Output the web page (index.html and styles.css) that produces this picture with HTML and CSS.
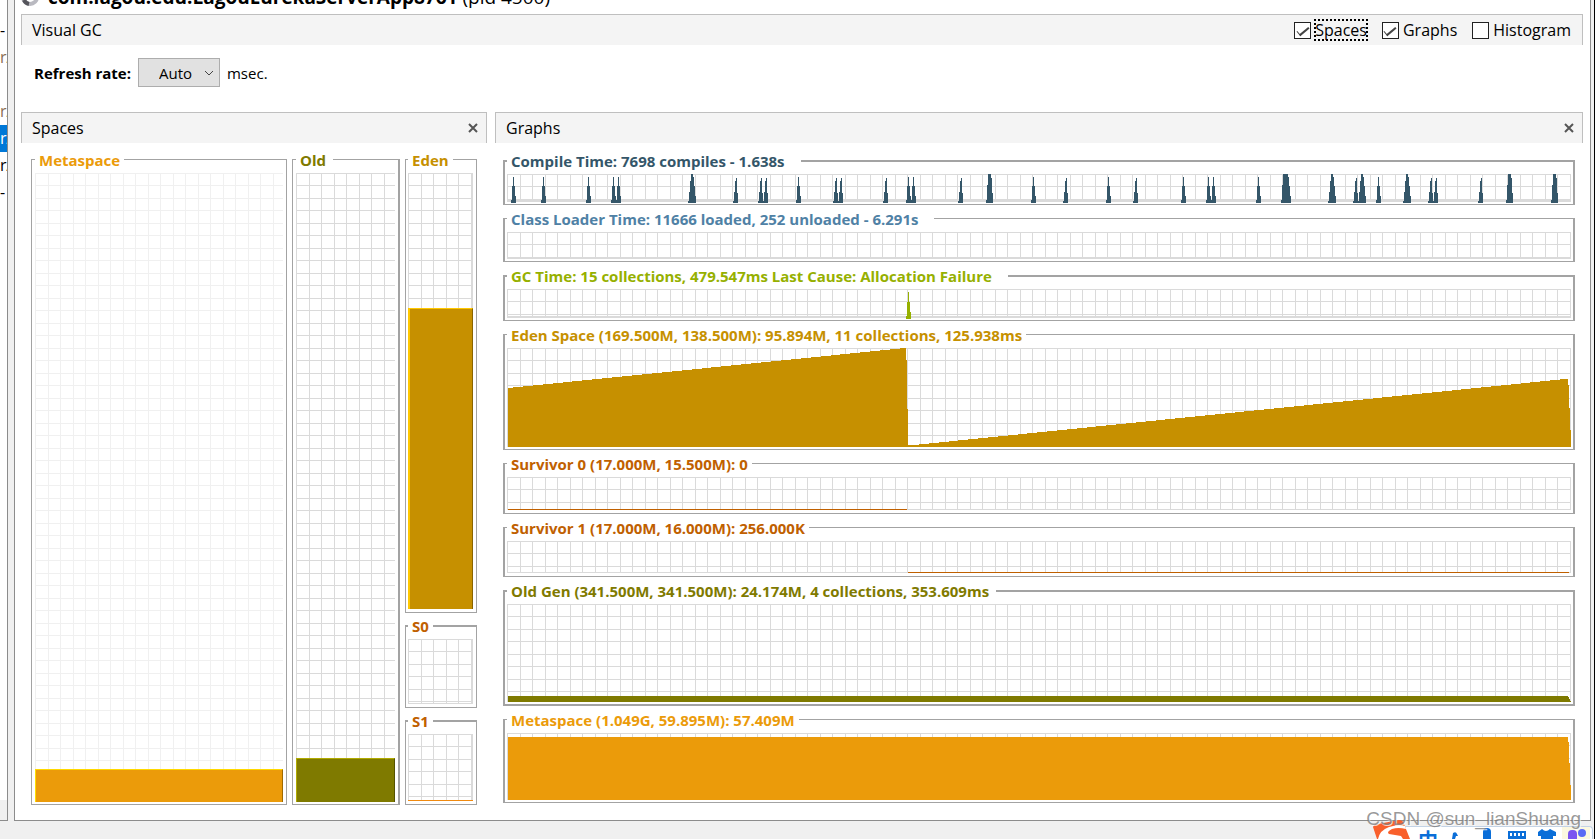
FILE: index.html
```html
<!DOCTYPE html>
<html lang="en">
<head>
<meta charset="utf-8">
<title>Visual GC</title>
<link rel="stylesheet" href="styles.css">
</head>
<body>
<div class="app">
  <aside class="sidebar">
    <ul class="tree">
      <li>-</li>
      <li class="muted">rA</li>
      <li></li>
      <li class="muted">rA</li>
      <li class="selected">rA</li>
      <li>rA</li>
      <li>-</li>
    </ul>
  </aside>

  <main class="window">
    <h1 class="title">
      <svg class="title-icon" width="18" height="18" viewBox="0 0 18 18" aria-hidden="true"><circle cx="9" cy="9" r="7" fill="none" stroke="#b9b9c0" stroke-width="4"/><path d="M3 12a7 7 0 0 0 5 4" fill="none" stroke="#55555c" stroke-width="4"/></svg>
      <span>com.lagou.edu.LagouEurekaServerApp8761 <span class="pid">(pid 4500)</span></span>
    </h1>

    <header class="tab tab-main">
      <span>Visual GC</span>
      <div class="checks">
        <label class="check"><input type="checkbox" checked><span class="focused">Spaces</span></label>
        <label class="check"><input type="checkbox" checked><span>Graphs</span></label>
        <label class="check"><input type="checkbox"><span>Histogram</span></label>
      </div>
    </header>

    <div class="toolbar">
      <label class="rate-label" for="rate">Refresh rate:</label>
      <div class="combo">
        <select id="rate"><option>Auto</option></select>
        <svg class="chevron" width="10" height="6" viewBox="0 0 10 6" aria-hidden="true"><path d="M1 1l4 4 4-4" fill="none" stroke="#444" stroke-width="1"/></svg>
      </div>
      <span>msec.</span>
    </div>

    <div class="panels">
      <section class="panel">
        <header class="tab">
          <span>Spaces</span>
          <button class="close" aria-label="Close Spaces"><svg width="10" height="10" viewBox="0 0 10 10"><path d="M1 1l8 8M9 1l-8 8" fill="none" stroke="#555" stroke-width="2"/></svg></button>
        </header>
        <div class="spaces">
          <fieldset class="group meta">
            <legend>Metaspace</legend>
            <div class="plot faint"><div class="bar bar-meta" style="height:5.3%"></div></div>
          </fieldset>
          <fieldset class="group old thick-right">
            <legend class="roomy">Old</legend>
            <div class="plot"><div class="bar bar-old" style="height:7%"></div></div>
          </fieldset>
          <div class="young">
            <fieldset class="group eden">
              <legend>Eden</legend>
              <div class="plot plot-small"><div class="bar bar-eden" style="height:69.1%"></div></div>
            </fieldset>
            <fieldset class="group survivor thick-top">
              <legend>S0</legend>
              <div class="plot plot-small plot-line"></div>
            </fieldset>
            <fieldset class="group survivor thick-top">
              <legend>S1</legend>
              <div class="plot plot-small"><div class="bar bar-s1"></div></div>
            </fieldset>
          </div>
        </div>
      </section>

      <section class="panel">
        <header class="tab">
          <span>Graphs</span>
          <button class="close" aria-label="Close Graphs"><svg width="10" height="10" viewBox="0 0 10 10"><path d="M1 1l8 8M9 1l-8 8" fill="none" stroke="#555" stroke-width="2"/></svg></button>
        </header>
        <div class="graphs">
          <fieldset class="group graph compile thick-top">
            <legend class="wide">Compile Time: 7698 compiles - 1.638s</legend>
            <svg class="plot plot-base" viewBox="0 0 1064 27" preserveAspectRatio="none">
              <defs>
                <path id="a" d="M0 28V25H1V12H2V3H3V12H4V21H5V28Z"/>
                <path id="b" d="M0 28V26H1V17H2V7H3V4H4V18H5V28Z"/>
                <path id="c" d="M0 28V26H1V17H2V7H3V0H5V3H6V12H7V21H8V28Z"/>
                <path id="d" d="M0 28V25H1V11H2V0H5V4H6V18H7V28Z"/>
                <path id="e" d="M0 28V25H1V11H2V0H7V3H8V12H9V21H10V28Z"/>
              </defs>
              <use href="#a" x="4"/><use href="#a" x="34"/><use href="#a" x="79"/><use href="#a" x="104"/><use href="#a" x="109"/>
              <use href="#c" x="181"/><use href="#b" x="226"/><use href="#b" x="251"/><use href="#b" x="256"/><use href="#a" x="289"/>
              <use href="#b" x="326"/><use href="#b" x="331"/><use href="#b" x="376"/><use href="#a" x="399"/><use href="#a" x="404"/>
              <use href="#b" x="451"/><use href="#d" x="479"/><use href="#a" x="524"/><use href="#b" x="556"/><use href="#a" x="599"/>
              <use href="#b" x="626"/><use href="#a" x="674"/><use href="#a" x="699"/><use href="#a" x="704"/><use href="#a" x="749"/>
              <use href="#e" x="774"/><use href="#c" x="821"/><use href="#b" x="846"/><use href="#c" x="851"/><use href="#a" x="869"/>
              <use href="#c" x="896"/><use href="#b" x="921"/><use href="#b" x="926"/><use href="#b" x="971"/><use href="#d" x="999"/><use href="#d" x="1044"/>
            </svg>
          </fieldset>
          <fieldset class="group graph loader">
            <legend class="wide">Class Loader Time: 11666 loaded, 252 unloaded - 6.291s</legend>
            <svg class="plot plot-base" viewBox="0 0 1064 27" preserveAspectRatio="none"></svg>
          </fieldset>
          <fieldset class="group graph gc thick-top">
            <legend class="wide">GC Time: 15 collections, 479.547ms Last Cause: Allocation Failure</legend>
            <svg class="plot plot-base" viewBox="0 0 1064 27" preserveAspectRatio="none"><use href="#a" x="399"/></svg>
          </fieldset>
          <fieldset class="group graph eden">
            <legend>Eden Space (169.500M, 138.500M): 95.894M, 11 collections, 125.938ms</legend>
            <svg class="plot" viewBox="0 0 1064 99" preserveAspectRatio="none"><path d="M1 99V40L398 0H399V12H400V61H401V97H407L1058 31H1061V37H1062V60H1063V82H1064V99Z"/></svg>
          </fieldset>
          <fieldset class="group graph survivor">
            <legend>Survivor 0 (17.000M, 15.500M): 0</legend>
            <svg class="plot plot-line" viewBox="0 0 1064 33" preserveAspectRatio="none"><path d="M1 32H400V33H1Z"/></svg>
          </fieldset>
          <fieldset class="group graph survivor">
            <legend>Survivor 1 (17.000M, 16.000M): 256.000K</legend>
            <svg class="plot plot-line" viewBox="0 0 1064 33" preserveAspectRatio="none"><path d="M401 32H1062V33H401Z"/></svg>
          </fieldset>
          <fieldset class="group graph old thick-top thick-bottom">
            <legend class="roomy">Old Gen (341.500M, 341.500M): 24.174M, 4 collections, 353.609ms</legend>
            <svg class="plot" viewBox="0 0 1064 99" preserveAspectRatio="none"><path d="M1 99V93H1061V94H1062V96H1063V98H1064V99Z"/></svg>
          </fieldset>
          <fieldset class="group graph meta">
            <legend>Metaspace (1.049G, 59.895M): 57.409M</legend>
            <svg class="plot" viewBox="0 0 1064 66" preserveAspectRatio="none"><path d="M1 66V4H1061V9H1062V30H1063V51H1064V66Z"/></svg>
          </fieldset>
        </div>
      </section>
    </div>
  </main>
</div>

<div class="ime" lang="zh">
  <svg class="ime-logo" width="40" height="19" viewBox="0 0 40 19" aria-hidden="true"><path d="M1 7Q2 4 6 4L27 0Q31 0 32 4L38 19H5Z" fill="#f9602c"/><path d="M6 19Q8 10 17 7Q26 4 33 6L34 9Q26 7 20 9Q14 12 17 14L29 16L31 19Z" fill="#fff"/></svg>
  <span class="ime-zh">中</span>
  <svg class="ime-icons" width="176" height="12" viewBox="0 0 176 12" aria-hidden="true">
    <rect x="146" y="0" width="28" height="12" fill="#fbf8e0"/>
    <g fill="#0a6ed8"><path d="M37 6q3-2 4 1l1 2h-2l-1 3h-3z"/><rect x="67" y="1" width="8" height="14" rx="4"/><path d="M92 4h18v8H92zM122 5l4-3q4 4 8 0l6 3v4h-3v3h-12V9h-3z"/></g>
    <path d="M94 6h2v3h-2zM98 6h2v3h-2zM102 6h2v3h-2zM106 6h2v3h-2z" fill="#fff"/>
    <rect x="152" y="3" width="9" height="12" rx="4" fill="#7a55f0"/><rect x="162" y="2" width="8" height="8" rx="4" fill="#5a6bf5"/>
  </svg>
</div>
<div class="watermark">CSDN @sun_lianShuang</div>
</body>
</html>
```
FILE: styles.css
```css
* {
  box-sizing: border-box;
}

body {
  margin: 0;
  height: 100vh;
  overflow: hidden;
  background: #f0f0f0;
  color: #000;
  font: 16px/20px "Open Sans", "Noto Sans", sans-serif;
  border-right: 1px solid #000;
}

.app {
  display: flex;
  gap: 6px;
  height: 100%;
  padding: 0 3px 18px 0;
}

/* Application tree, mostly scrolled out of view */
.sidebar {
  flex: 0 0 8px;
  overflow: hidden;
  border: solid #8c8c8c;
  border-width: 0 1px 1px 0;
  background: #fff;
  display: flex;
  flex-direction: column;
}

.sidebar::after {
  content: "";
  height: 20px;
  margin-top: auto;
  background: #f0f0f0;
}

.tree {
  margin: 0;
  padding: 17px 0 0;
  list-style: none;
  line-height: 27px;
}

.tree li {
  height: 27px;
}

.tree .muted {
  color: #8a6d52;
}

.tree .selected {
  background: #0078d7;
  color: #fff;
}

.window {
  flex: 1;
  min-width: 0;
  display: flex;
  flex-direction: column;
  padding: 0 7px 0 6px;
  border: solid #8c8c8c;
  border-width: 0 1px 1px;
  background: #fff;
}

.title {
  display: flex;
  align-items: flex-end;
  gap: 9px;
  height: 14px;
  margin: 0;
  padding-bottom: 8px;
  font-size: 19px;
  line-height: 18px;
  font-weight: 700;
  white-space: nowrap;
}

.title-icon {
  flex: none;
}

.pid {
  font-weight: 400;
}

.tab {
  display: flex;
  align-items: center;
  justify-content: space-between;
  height: 31px;
  flex: none;
  padding: 0 8px 0 10px;
  border: 1px solid #bfbfbf;
  border-bottom: 0;
  background: #f4f4f4;
}

.tab-main {
  padding-right: 11px;
}

.checks {
  display: flex;
  gap: 15px;
}

.check {
  display: flex;
  align-items: center;
  gap: 4px;
}

.check input {
  appearance: none;
  display: grid;
  place-items: center;
  width: 17px;
  height: 17px;
  margin: 0;
  border: 1px solid #222;
  background: #fff;
}

.check input:checked::before {
  content: "";
  width: 11px;
  height: 4px;
  border: solid #444;
  border-width: 0 0 2px 1px;
  transform: rotate(-40deg);
}

.focused {
  outline: 2px dotted #000;
  outline-offset: -1px;
}

.toolbar {
  display: flex;
  align-items: center;
  gap: 7px;
  height: 67px;
  padding: 0 13px 12px;
  flex: none;
  font-size: 15px;
}

.rate-label {
  font-weight: 700;
}

.combo {
  position: relative;
}

.combo select {
  appearance: none;
  width: 82px;
  height: 29px;
  padding: 0 0 0 20px;
  border: 1px solid #adadad;
  border-radius: 0;
  background: #e1e1e1;
  color: #000;
  font: inherit;
}

.chevron {
  position: absolute;
  right: 6px;
  top: 12px;
}

.panels {
  flex: 1;
  min-height: 0;
  display: grid;
  grid-template-columns: minmax(0, 466fr) minmax(0, 1088fr);
  gap: 8px;
}

.panel {
  display: flex;
  flex-direction: column;
  min-height: 0;
}

.close {
  display: flex;
  padding: 0;
  border: 0;
  background: none;
}

.spaces {
  flex: 1;
  min-height: 0;
  display: grid;
  grid-template-columns: minmax(0, 256fr) minmax(0, 108fr) minmax(0, 72fr);
  gap: 5px;
  padding: 6px 10px 15px;
}

.young {
  display: grid;
  grid-template-rows: minmax(0, 464fr) minmax(0, 93fr) minmax(0, 95fr);
  gap: 2px;
  min-height: 0;
}

.graphs {
  flex: 1;
  min-height: 0;
  display: grid;
  grid-template-rows:
    minmax(0, 55fr) minmax(0, 54fr) minmax(0, 56fr) minmax(0, 126fr)
    minmax(0, 61fr) minmax(0, 60fr) minmax(0, 126fr) minmax(0, 94fr);
  gap: 3px;
  padding: 7px 8px 17px;
}

/* Titled group with a grid-backed plot */
.group {
  display: flex;
  min-width: 0;
  min-height: 0;
  margin: 0;
  padding: 3px 3px 2px;
  border: 1px solid #a3a3a3;
}

.group legend {
  padding: 2px 4px 0;
  font-size: 15px;
  line-height: 19px;
  font-weight: 700;
  white-space: nowrap;
}

.group legend.wide {
  padding-right: 16px;
}

.group legend.roomy {
  padding-right: 7px;
}

.thick-top {
  border-top-width: 2px;
}

.thick-right {
  border-right-width: 2px;
}

.graph {
  padding: 3px 2px 2px;
  border-left-width: 2px;
  border-right-width: 2px;
}

.graph.survivor {
  padding-bottom: 3px;
}

.thick-bottom {
  border-bottom-width: 2px;
}

.young .group {
  padding: 3px 3px 3px 2px;
}

.plot {
  --line: #dadada;
  flex: 1;
  display: flex;
  align-items: flex-end;
  min-width: 0;
  width: 100%;
  height: 100%;
  background:
    linear-gradient(90deg, var(--line) 0 1px, transparent 1px 13px, var(--line) 13px 14px, transparent 14px) 0 0 / 25px 25px,
    linear-gradient(var(--line) 0 1px, transparent 1px 12px, var(--line) 12px 13px, transparent 13px) 0 0 / 25px 25px;
}

svg.plot {
  display: block;
  overflow: visible;
  fill: currentColor;
  shape-rendering: crispEdges;
}

.faint {
  --line: #f0f0f0;
}

.plot-small {
  border-right: 2px solid #dadada;
}

.plot-base {
  box-shadow: inset 0 -2px #dadada;
}

.plot-line {
  box-shadow: inset 0 -1px #dadada;
}

.bar {
  width: 100%;
  border: 1px solid;
  border-bottom: 0;
}

.plot-small .bar {
  flex: none;
  width: calc(100% + 2px);
}

.bar-meta {
  background: #eb9b0a;
  border-color: #ffd800 #a06a00 #eb9b0a #ffe000;
}

.bar-old {
  background: #7f7a00;
  border-color: #b0aa00 #555200 #7f7a00 #b0aa00;
}

.bar-eden {
  background: #c69000;
  border-color: #ffc800 #8a6400 #c69000 #ffc800;
  border-left-width: 2px;
}

.plot .bar-s1 {
  height: 1px;
  border: 0;
  background: #f08a10;
}

.compile {
  color: #345669;
}

.loader {
  color: #4f81a5;
}

.gc {
  color: #96b000;
}

.eden {
  color: #c69000;
}

.survivor {
  color: #c06000;
}

.old {
  color: #7f7a00;
}

.meta {
  color: #eb9b0a;
}

/* Input-method bar and watermark float over the window's lower edge */
.ime {
  position: absolute;
  right: 2px;
  bottom: 0;
  display: flex;
  align-items: flex-end;
  width: 202px;
  height: 13px;
  border: solid #c3d3e6;
  border-width: 1px 1px 0;
  border-radius: 4px 4px 0 0;
  background: #fff;
}

.ime-logo {
  flex: none;
  margin-left: -20px;
}

.ime-zh {
  flex: none;
  width: 26px;
  height: 9px;
  overflow: hidden;
  padding-left: 6px;
  color: #0a6ed8;
  font: 700 20px/20px "Noto Sans CJK SC", sans-serif;
}

.ime-icons {
  position: absolute;
  right: 0;
  bottom: 0;
}

.watermark {
  position: absolute;
  right: 14px;
  bottom: 8px;
  color: rgba(120, 120, 120, 0.75);
  font: 19px/24px "Liberation Sans", Arial, sans-serif;
  text-shadow: 1px 1px rgba(255, 255, 255, 0.7);
}
```
